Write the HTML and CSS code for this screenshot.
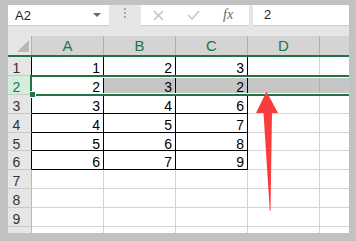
FILE: index.html
```html
<!DOCTYPE html>
<html lang="en">
<head>
  <meta charset="UTF-8">
  <title>Sheet</title>
  <link rel="stylesheet" href="styles.css">
</head>
<body>
  <div class="window">
    <div class="formula-bar">
      <div class="name-box">
        <span>A2</span>
        <svg class="caret" width="8" height="4" viewBox="0 0 8 4"><path d="M0 0H8L4 4Z" fill="#6a6a6a"/></svg>
      </div>
      <div class="grip"><i></i><i></i><i></i></div>
      <div class="fx-tools">
        <svg class="cancel" width="11" height="11" viewBox="0 0 11 11"><path d="M1 1L10 10M10 1L1 10" stroke="#bdbdbd" stroke-width="1.4"/></svg>
        <svg class="enter" width="13" height="10" viewBox="0 0 13 10"><path d="M1 5L5 9L12 1" stroke="#c4c4c4" stroke-width="1.5" fill="none"/></svg>
        <span class="fx">fx</span>
      </div>
      <div class="formula-input">2</div>
    </div>

    <div class="sheet">
      <div class="row head">
        <div class="corner"><svg width="13" height="13" viewBox="0 0 13 13"><path d="M0 12H12V0Z" fill="#b8b8b8"/></svg></div>
        <div class="col-h">A</div>
        <div class="col-h">B</div>
        <div class="col-h">C</div>
        <div class="col-h">D</div>
        <div class="col-h last"></div>
      </div>

      <div class="row">
        <div class="rh data">1</div>
        <div class="cell b">1</div><div class="cell b">2</div><div class="cell b">3</div>
        <div class="cell"></div><div class="cell last"></div>
      </div>
      <div class="row selected">
        <div class="rh data">2</div>
        <div class="cell b active">2</div><div class="cell b">3</div><div class="cell b">2</div>
        <div class="cell sel-g"></div><div class="cell last"></div>
        <div class="selection"><span class="handle"></span></div>
      </div>
      <div class="row">
        <div class="rh data">3</div>
        <div class="cell b">3</div><div class="cell b">4</div><div class="cell b">6</div>
        <div class="cell"></div><div class="cell last"></div>
      </div>
      <div class="row">
        <div class="rh data">4</div>
        <div class="cell b">4</div><div class="cell b">5</div><div class="cell b">7</div>
        <div class="cell"></div><div class="cell last"></div>
      </div>
      <div class="row">
        <div class="rh data">5</div>
        <div class="cell b">5</div><div class="cell b">6</div><div class="cell b">8</div>
        <div class="cell"></div><div class="cell last"></div>
      </div>
      <div class="row">
        <div class="rh data">6</div>
        <div class="cell b">6</div><div class="cell b">7</div><div class="cell b">9</div>
        <div class="cell"></div><div class="cell last"></div>
      </div>
      <div class="row">
        <div class="rh">7</div>
        <div class="cell"></div><div class="cell"></div><div class="cell"></div>
        <div class="cell"></div><div class="cell last"></div>
      </div>
      <div class="row">
        <div class="rh">8</div>
        <div class="cell"></div><div class="cell"></div><div class="cell"></div>
        <div class="cell"></div><div class="cell last"></div>
      </div>
      <div class="row">
        <div class="rh">9</div>
        <div class="cell"></div><div class="cell"></div><div class="cell"></div>
        <div class="cell"></div><div class="cell last"></div>
      </div>
      <div class="row">
        <div class="rh">10</div>
        <div class="cell"></div><div class="cell"></div><div class="cell"></div>
        <div class="cell"></div><div class="cell last"></div>
      </div>
    </div>
  </div>

  <!-- annotation arrow pointing at the selected row -->
  <svg class="arrow" width="356" height="241" viewBox="0 0 356 241">
    <path d="M266.5 91.5L278 113H272L270.5 211H269.8L263.5 113H256Z" fill="#fb3c3c"/>
  </svg>
</body>
</html>
```

FILE: styles.css
```css
body {
  margin: 0;
  width: 356px;
  height: 241px;
  overflow: hidden;
  position: relative;
  background-color: #c2c2c2;
  font-family: 'Liberation Sans', Arial, sans-serif;
}

.window {
  margin: 5px 7px 0 8px;
  height: 228px;
  background-color: #fff;
  overflow: hidden;
}

/* formula bar */
.formula-bar {
  display: flex;
  align-items: flex-start;
  height: 31px;
  background-color: #e6e6e6;
}

.name-box {
  width: 101px;
  height: 21px;
  box-sizing: border-box;
  display: flex;
  align-items: center;
  justify-content: space-between;
  padding: 0 8px 0 7px;
  background-color: #fff;
  border-bottom: 1px solid #cfcfcf;
  font-size: 13px;
  color: #222;
}

.grip {
  width: 32px;
  display: flex;
  flex-direction: column;
  align-items: center;
  gap: 2px;
  padding-top: 3px;
}

.grip i {
  width: 2px;
  height: 2px;
  background-color: #a8a8a8;
}

.fx-tools {
  width: 108px;
  height: 21px;
  box-sizing: border-box;
  display: flex;
  align-items: center;
  background-color: #fff;
  border-bottom: 1px solid #cfcfcf;
}

.cancel {
  margin-left: 12px;
}

.enter {
  margin-left: 23px;
}

.fx {
  margin-left: 23px;
  font-family: 'Liberation Serif', serif;
  font-style: italic;
  font-size: 14px;
  color: #666;
}

.formula-input {
  flex: 1;
  height: 21px;
  box-sizing: border-box;
  margin-left: 4px;
  padding-left: 11px;
  background-color: #fff;
  border-bottom: 1px solid #cfcfcf;
  font-size: 13px;
  line-height: 20px;
  color: #222;
}

/* grid */
.row {
  display: flex;
  height: 18.9px;
}

.row > div {
  box-sizing: border-box;
}

.row.head {
  height: 19px;
  background-color: #d4d4d4;
  border-bottom: 2px solid #217346;
}

.corner {
  width: 24px;
  background-color: #e6e6e6;
  border-right: 1px solid #b0b0b0;
  padding: 4px 0 0 9px;
}

.corner svg {
  display: block;
}

.col-h {
  width: 72px;
  border-right: 1px solid #b0b0b0;
  text-align: center;
  font-size: 15px;
  line-height: 14px;
  padding-top: 3px;
  color: #217346;
}

.last {
  flex: 1;
  border-right: none !important;
}

.rh {
  width: 24px;
  padding: 3px 6px 0 0;
  background-color: #e6e6e6;
  border-right: 1px solid #b8b8b8;
  border-bottom: 1px solid #c8c8c8;
  text-align: center;
  font-size: 14px;
  line-height: 16px;
  color: #333;
}

.rh.data {
  border-right-color: #000;
}

.cell {
  width: 72px;
  padding: 3px 3px 0 0;
  border-right: 1px solid #d4d4d4;
  border-bottom: 1px solid #d4d4d4;
  text-align: right;
  font-size: 14px;
  line-height: 16px;
  color: #000;
}

.cell.b {
  border-right-color: #000;
  border-bottom-color: #000;
}

/* selected row 2 */
.selected {
  position: relative;
}

.selected .rh {
  background-color: #d3eedd;
  color: #217346;
}

.selected .cell {
  background-color: #c6c6c6;
}

.selected .cell.active {
  background-color: #fff;
}

.selected .cell.sel-g {
  border-right-color: #b0b0b0;
}

.selection {
  position: absolute;
  left: 22px;
  top: -1px;
  right: -2px;
  bottom: -1px;
  border: 2px solid #217346;
  border-right: none;
  box-shadow: inset 0 0 0 1px #fff;
}

.handle {
  position: absolute;
  left: -2px;
  bottom: -4px;
  width: 5px;
  height: 5px;
  background-color: #217346;
  border: 1px solid #fff;
  border-left: none;
}

.arrow {
  position: absolute;
  left: 0;
  top: 0;
  pointer-events: none;
}
```
